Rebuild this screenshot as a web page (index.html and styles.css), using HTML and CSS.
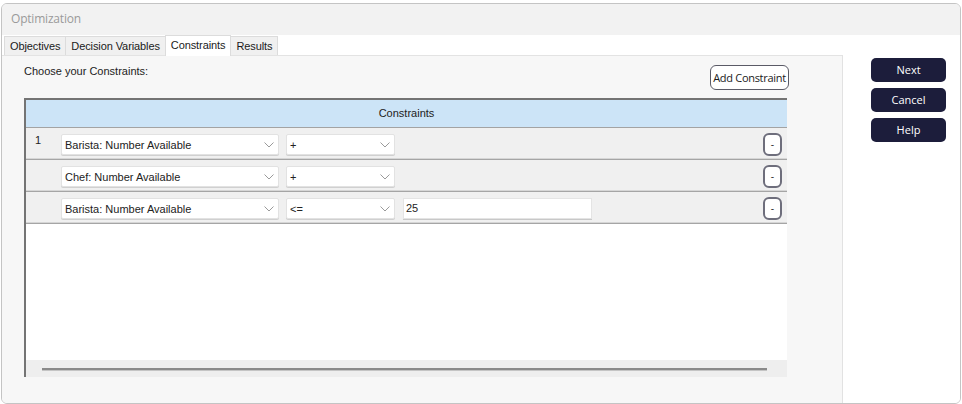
FILE: index.html
```html
<!DOCTYPE html>
<html>
<head>
<meta charset="utf-8">
<link rel="stylesheet" href="styles.css">
</head>
<body>
<div class="window">
  <div class="titlebar">Optimization</div>
  <div class="tabs">
    <div class="tab">Objectives</div>
    <div class="tab">Decision Variables</div>
    <div class="tab active">Constraints</div>
    <div class="tab">Results</div>
  </div>
  <div class="body">
    <div class="panel">
      <div class="topbar">
        <span class="label">Choose your Constraints:</span>
        <button class="add-btn">Add Constraint</button>
      </div>
      <div class="table">
        <div class="thead">Constraints</div>
        <div class="row">
          <div class="num">1</div>
          <div class="select wide"><span>Barista: Number Available</span><svg class="chev" width="10" height="6" viewBox="0 0 10 6"><polyline points="0.5,0.5 5,5 9.5,0.5" fill="none" stroke="#9a9a9a" stroke-width="1"/></svg></div>
          <div class="select op"><span>+</span><svg class="chev" width="10" height="6" viewBox="0 0 10 6"><polyline points="0.5,0.5 5,5 9.5,0.5" fill="none" stroke="#9a9a9a" stroke-width="1"/></svg></div>
          <div class="spacer"></div>
          <button class="minus">-</button>
        </div>
        <div class="row">
          <div class="num"></div>
          <div class="select wide"><span>Chef: Number Available</span><svg class="chev" width="10" height="6" viewBox="0 0 10 6"><polyline points="0.5,0.5 5,5 9.5,0.5" fill="none" stroke="#9a9a9a" stroke-width="1"/></svg></div>
          <div class="select op"><span>+</span><svg class="chev" width="10" height="6" viewBox="0 0 10 6"><polyline points="0.5,0.5 5,5 9.5,0.5" fill="none" stroke="#9a9a9a" stroke-width="1"/></svg></div>
          <div class="spacer"></div>
          <button class="minus">-</button>
        </div>
        <div class="row">
          <div class="num"></div>
          <div class="select wide"><span>Barista: Number Available</span><svg class="chev" width="10" height="6" viewBox="0 0 10 6"><polyline points="0.5,0.5 5,5 9.5,0.5" fill="none" stroke="#9a9a9a" stroke-width="1"/></svg></div>
          <div class="select op"><span>&lt;=</span><svg class="chev" width="10" height="6" viewBox="0 0 10 6"><polyline points="0.5,0.5 5,5 9.5,0.5" fill="none" stroke="#9a9a9a" stroke-width="1"/></svg></div>
          <div class="input">25</div>
          <div class="spacer"></div>
          <button class="minus">-</button>
        </div>
        <div class="empty"></div>
        <div class="hscroll"><div class="thumb"></div></div>
      </div>
    </div>
    <div class="side">
      <button class="nav-btn">Next</button>
      <button class="nav-btn">Cancel</button>
      <button class="nav-btn">Help</button>
    </div>
  </div>
</div>
</body>
</html>
```

FILE: styles.css
```css
html, body {
  margin: 0;
  padding: 0;
  background: #ffffff;
}

body {
  font-family: "Liberation Sans", Arial, sans-serif;
  width: 962px;
  height: 404px;
  overflow: hidden;
}

.window {
  box-sizing: border-box;
  margin: 3px 0 0 1px;
  width: 960px;
  height: 401px;
  border: 1px solid #c4c4c4;
  border-radius: 6px;
  overflow: hidden;
  background: #ffffff;
  display: flex;
  flex-direction: column;
}

.titlebar {
  height: 31px;
  background: #f2f2f2;
  color: #9a9a9a;
  font-family: "Open Sans", "Noto Sans", sans-serif;
  font-size: 12px;
  letter-spacing: -0.2px;
  line-height: 30px;
  padding-left: 9px;
  flex: none;
}

.tabs {
  height: 20px;
  display: flex;
  align-items: flex-end;
  padding-left: 2px;
  background: #ffffff;
  flex: none;
}

.tab {
  box-sizing: border-box;
  height: 19px;
  padding: 0 5px;
  background: #f0f0f0;
  border: 1px solid #dcdcdc;
  border-bottom: none;
  font-size: 11px;
  letter-spacing: -0.1px;
  color: #1a1a1a;
  line-height: 18px;
  margin-right: -1px;
}

.tab.active {
  height: 21px;
  background: #ffffff;
  line-height: 18px;
  position: relative;
  z-index: 1;
  margin-bottom: -1px;
}

.body {
  flex: 1;
  display: flex;
  min-height: 0;
}

.panel {
  box-sizing: border-box;
  width: 841px;
  background: #f7f7f7;
  border-top: 1px solid #e3e3e3;
  border-right: 1px solid #e2e2e2;
  padding: 9px 55px 0 22px;
  display: flex;
  flex-direction: column;
}

.topbar {
  display: flex;
  justify-content: space-between;
  align-items: flex-start;
  height: 25px;
  margin-bottom: 8px;
  margin-right: -2px;
}

.label {
  font-size: 11px;
  color: #222;
  margin-top: 0;
}

.add-btn {
  box-sizing: border-box;
  width: 79px;
  height: 25px;
  background: #ffffff;
  border: 1px solid #5a5a66;
  border-radius: 6px;
  font-family: "Open Sans", "Noto Sans", sans-serif;
  font-size: 11px;
  letter-spacing: -0.3px;
  color: #1a1a1a;
  padding: 0;
}

.table {
  box-sizing: border-box;
  height: 279px;
  border-top: 2px solid #747474;
  border-left: 2px solid #747474;
  display: flex;
  flex-direction: column;
  background: #ffffff;
}

.thead {
  height: 27px;
  background: #cce4f7;
  border-bottom: 1px solid #a3a3a3;
  text-align: center;
  font-size: 11px;
  color: #222;
  line-height: 26px;
  flex: none;
}

.row {
  box-sizing: border-box;
  height: 32px;
  background: #f0f0f0;
  border-bottom: 1px solid #a5a5a5;
  box-shadow: inset 0 -1px 0 #d6d6d6;
  display: flex;
  align-items: flex-start;
  padding-top: 6px;
  flex: none;
}

.num {
  width: 35px;
  font-size: 11px;
  color: #222;
  padding-left: 9px;
  box-sizing: border-box;
  margin-top: 0;
}

.select {
  box-sizing: border-box;
  height: 21px;
  background: #ffffff;
  border: 1px solid #e2e2e2;
  border-radius: 2px;
  box-shadow: 0 1px 0 #d0d0d0;
  display: flex;
  align-items: center;
  justify-content: space-between;
  padding: 0 4px 0 3px;
  font-size: 11px;
  color: #222;
}

.select.wide {
  width: 218px;
  margin-right: 7px;
}

.select.op {
  width: 109px;
  margin-right: 8px;
}

.chev {
  margin-top: 1px;
}

.input {
  box-sizing: border-box;
  width: 189px;
  height: 21px;
  background: #ffffff;
  border: 1px solid #e4e4e4;
  box-shadow: 0 1px 0 #c8c8c8;
  font-size: 11px;
  color: #222;
  line-height: 19px;
  padding-left: 2px;
}

.spacer {
  flex: 1;
}

.minus {
  box-sizing: border-box;
  width: 19px;
  height: 23px;
  margin-top: -1px;
  margin-right: 5px;
  background: #ffffff;
  border: 2px solid #6e6e7c;
  border-radius: 6px;
  font-size: 10px;
  color: #333;
  padding: 0;
  line-height: 16px;
}

.empty {
  flex: 1;
  background: #ffffff;
}

.hscroll {
  height: 17px;
  background: #eeeeee;
  flex: none;
  display: flex;
  align-items: center;
  padding-left: 16px;
}

.thumb {
  width: 725px;
  height: 2px;
  background: #8a8a8a;
  box-shadow: 0 1px 0 #c4c4c4;
}

.side {
  flex: 1;
  background: #ffffff;
  display: flex;
  flex-direction: column;
  align-items: flex-start;
  gap: 6px;
  padding: 3px 0 0 28px;
}

.nav-btn {
  width: 75px;
  height: 24px;
  background: #1c1d3b;
  color: #ffffff;
  border: none;
  border-radius: 5px;
  font-family: "Open Sans", "Noto Sans", sans-serif;
  font-size: 11px;
  padding: 0 0 2px;
}
```
